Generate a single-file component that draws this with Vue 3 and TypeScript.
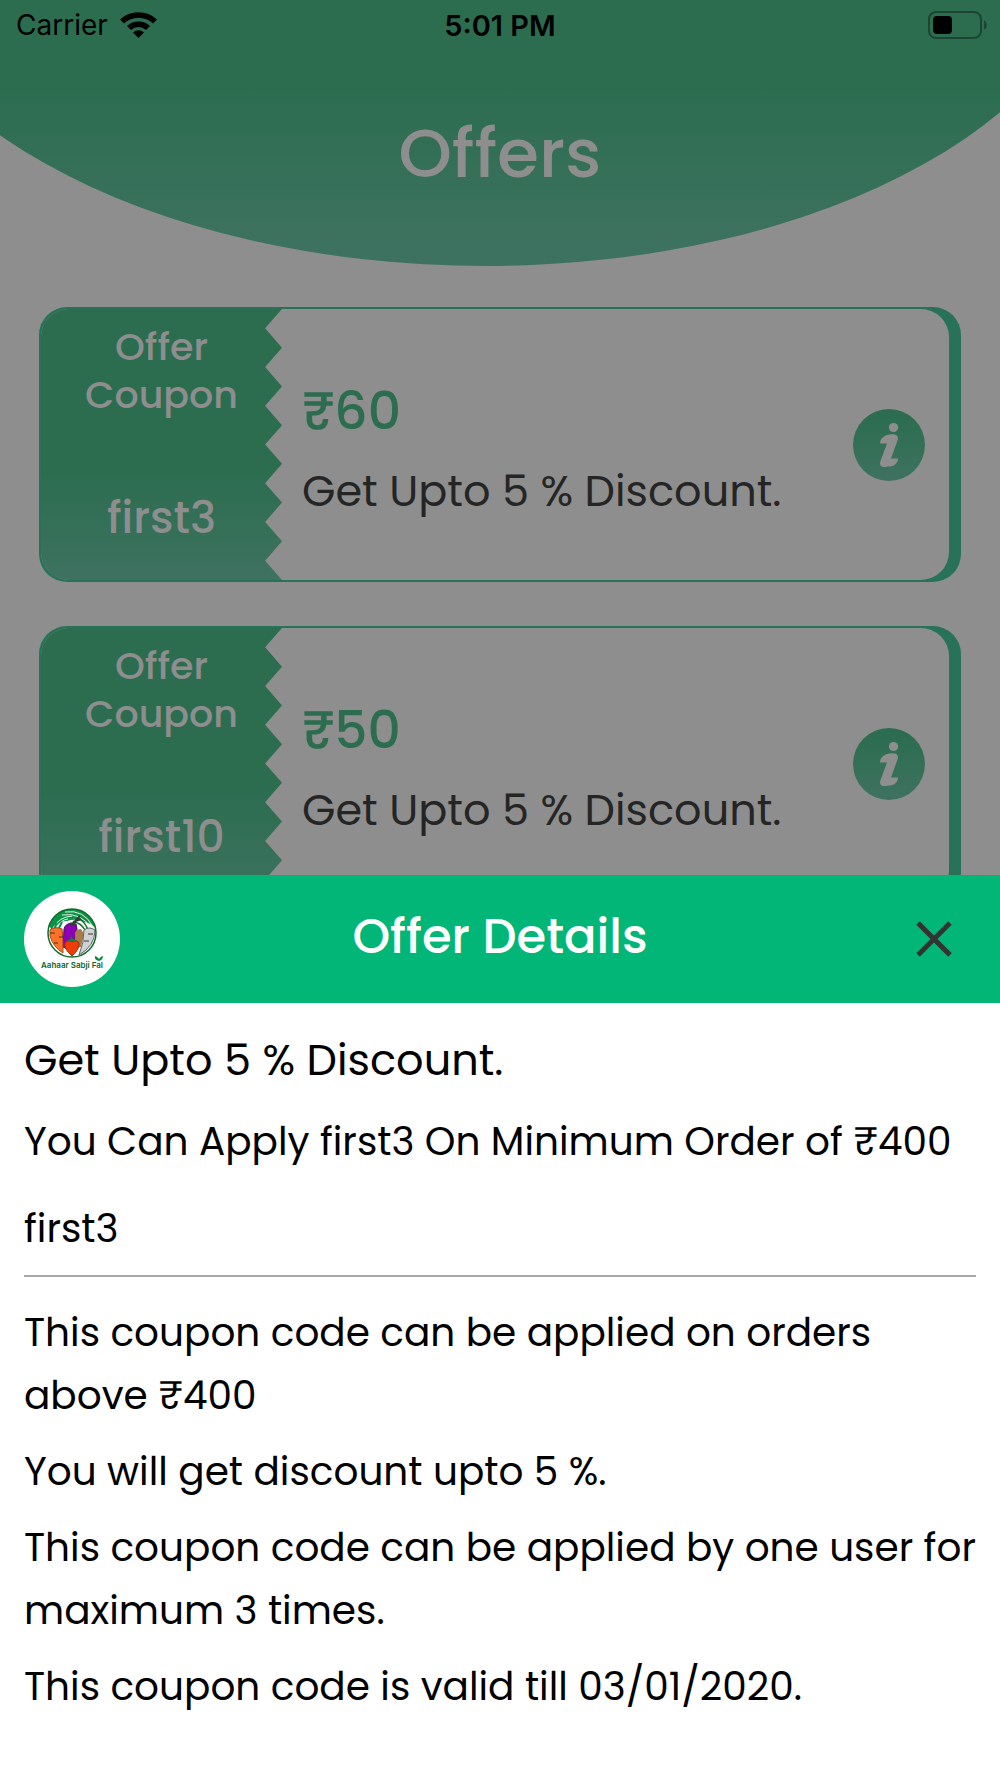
<script setup lang="ts">
import { computed, ref } from 'vue'

interface Offer {
  code: string
  amount: number
  percent: number
  minimumOrder: number
  maxUses: number
  validTill: string
}

const offers: Offer[] = [
  { code: 'first3', amount: 60, percent: 5, minimumOrder: 400, maxUses: 3, validTill: '03/01/2020' },
  { code: 'first10', amount: 50, percent: 5, minimumOrder: 400, maxUses: 3, validTill: '03/01/2020' },
]

const selected = ref<Offer | null>(offers[0])

const terms = computed<string[]>(() => {
  const offer = selected.value
  if (!offer) return []
  return [
    `This coupon code can be applied on orders above ₹${offer.minimumOrder}`,
    `You will get discount upto ${offer.percent} %.`,
    `This coupon code can be applied by one user for maximum ${offer.maxUses} times.`,
    `This coupon code is valid till ${offer.validTill}.`,
  ]
})
</script>

<template>
  <div class="screen">
    <header class="hero">
      <div class="status">
        <div class="carrier">
          <span>Carrier</span>
          <svg class="wifi" viewBox="0 0 37 28" aria-hidden="true">
            <path d="M0 8.500A27 27 0 0 1 37 8.500L33 12.500A21 21 0 0 0 4 12.500Z" />
            <path d="M7 15A17 17 0 0 1 30 15L26 19A11 11 0 0 0 11 19Z" />
            <path d="M13 21.500A8 8 0 0 1 24 21.500L18.500 27Z" />
          </svg>
        </div>
        <time class="clock">5:01 PM</time>
        <svg class="battery" viewBox="0 0 60 28" aria-hidden="true">
          <rect x="1" y="1" width="52" height="26" rx="7" fill="none" stroke="#1c4533" stroke-width="2" />
          <rect x="5" y="5" width="19" height="18" rx="4" />
          <path d="M56 9Q59 11 59 14T56 19Z" fill="#1c4533" />
        </svg>
      </div>
      <h1>Offers</h1>
    </header>

    <main class="offers">
      <article v-for="offer in offers" :key="offer.code" class="card">
        <div class="card-inner">
          <div class="stub">
            <p class="stub-label">Offer Coupon</p>
            <p class="stub-code">{{ offer.code }}</p>
          </div>
          <div class="summary">
            <p class="amount">₹{{ offer.amount }}</p>
            <p class="headline">Get Upto {{ offer.percent }} % Discount.</p>
          </div>
          <button class="info" type="button" aria-label="Offer information" @click="selected = offer">
            <svg viewBox="0 0 72 72" aria-hidden="true">
              <defs>
                <linearGradient id="info-fill" x1="0" y1="0" x2="0" y2="1">
                  <stop offset="0.1" stop-color="#2c6d50" />
                  <stop offset="1" stop-color="#3e7260" />
                </linearGradient>
              </defs>
              <circle cx="36" cy="36" r="36" fill="url(#info-fill)" />
              <circle cx="40.500" cy="18.500" r="4.600" fill="#8e8e8e" />
              <path
                d="M27 34.500C27 29 32 25.500 39 25.200C44 25 46 27.500 44.500 31.500L38 49.500H44.500C46 50 44 54 41.500 56C39 58 36 57 32.500 58C28 58.500 26 56 27.500 52L34 34.500Z"
                fill="#8e8e8e"
              />
            </svg>
          </button>
        </div>
      </article>
    </main>

    <section v-if="selected" class="sheet" role="dialog" aria-labelledby="sheet-title">
      <header class="sheet-head">
        <svg class="logo" viewBox="0 0 96 96" role="img" aria-label="Aahaar Sabji Fal">
          <circle cx="48" cy="48" r="48" fill="#fff" />
          <path d="M25 36Q30 18 48 18T71 37Q67 32 60 31Q52 27 43 30Q34 30 31 38Z" fill="#0b9347" />
          <path d="M29 37Q35 26 48 25M33 37Q36 29 44 28M38 24Q57 21 67 37M41 21Q60 18 69 36" fill="none" stroke="#e2f3df" stroke-width="1" />
          <path d="M61 39Q57 32 50 31M64 39Q62 33 57 29" fill="none" stroke="#176f2f" stroke-width="1.500" />
          <path d="M28 39L27 32M31 39L32 30M34 39L38 31" fill="none" stroke="#0b9347" stroke-width="2" />
          <path d="M40 38Q41 33 47 32L52 33Q54 37 52 43L49 55Q45 60 39 56Z" fill="#8d00b5" stroke="#4b1368" stroke-width="1" />
          <path d="M46 33Q50 33 52 29L56 25M46 33L52 34M49 31L57 28" fill="none" stroke="#333c3b" stroke-width="2" />
          <path d="M51 42Q52 38 57 38L60 43L57 56H51Z" fill="#a77c47" />
          <path d="M26 39Q31 35 38 38Q39 45 39 62Q29 56 26 45Z" fill="#ff7028" stroke="#a44c19" stroke-width="1" />
          <path d="M60 39Q65 35 71 39Q71 55 55 64Q60 52 60 39Z" fill="#ced1d5" stroke="#5b6661" stroke-width="1" />
          <path d="M48 65Q39 57 41 52Q43 48 48 51Q53 48 55 52Q56 58 48 65Z" fill="#ee3c06" stroke="#96310d" stroke-width="1" />
          <path d="M26 42H31M35 46H39M30 52H34M64 43H69M60 50H65" stroke="#423522" stroke-width="1" />
          <path d="M43 50L47 48L46 44L49 48L53 50L48 51Z" fill="#16813a" />
          <circle cx="48" cy="42" r="24" fill="none" stroke="#136a2b" stroke-width="1.500" />
          <path d="M75 70Q70 69 71 65Q74 66 75 68Q77 65 79 65Q79 69 75 70Z" fill="#078b3b" />
          <text x="48" y="77" text-anchor="middle">Aahaar Sabji Fal</text>
        </svg>
        <h2 id="sheet-title">Offer Details</h2>
        <button class="close" type="button" aria-label="Close" @click="selected = null">
          <svg viewBox="0 0 36 36" aria-hidden="true">
            <path d="M2 2L34 34M34 2L2 34" stroke="#333" stroke-width="5" />
          </svg>
        </button>
      </header>
      <div class="sheet-body">
        <p class="sheet-headline">Get Upto {{ selected.percent }} % Discount.</p>
        <p class="condition">You Can Apply {{ selected.code }} On Minimum Order of ₹{{ selected.minimumOrder }}</p>
        <p class="code">{{ selected.code }}</p>
        <ul class="terms">
          <li v-for="term in terms" :key="term">{{ term }}</li>
        </ul>
      </div>
    </section>
  </div>
</template>

<style>
body {
  margin: 0;
  background: #8e8e8e;
}
</style>

<style scoped>
* {
  box-sizing: border-box;
}

h1,
h2,
p,
ul {
  margin: 0;
  padding: 0;
  font-weight: inherit;
}

button {
  border: 0;
  padding: 0;
  background: none;
  cursor: pointer;
}

svg {
  display: block;
}

.screen {
  height: 100vh;
  overflow: hidden;
  background: #8e8e8e;
  color: #000;
  font-family: Poppins, Inter, "Noto Sans", sans-serif;
  font-weight: 400;
}

.hero {
  height: 266px;
  background: linear-gradient(#2c6d50 90px, #3e7260 250px);
  clip-path: ellipse(62% 347px at 48.5% -81px);
}

.status {
  display: grid;
  grid-template-columns: 1fr auto 1fr;
  align-items: center;
  height: 50px;
  padding: 0 12px;
  font-family: Inter, "Noto Sans", sans-serif;
  font-size: 28px;
}

.carrier {
  display: flex;
  align-items: center;
  gap: 12px;
  padding-left: 4px;
}

.wifi {
  width: 37px;
  height: 28px;
}

.clock {
  font-size: 29px;
  font-weight: 600;
}

.battery {
  width: 60px;
  height: 28px;
  justify-self: end;
}

h1 {
  padding-top: 56px;
  color: #8e8e8e;
  font-size: 68px;
  font-weight: 500;
  line-height: 96px;
  text-align: center;
}

.offers {
  display: flex;
  flex-direction: column;
  gap: 44px;
  padding: 41px 39px;
}

.card {
  padding: 2px 12px 2px 2px;
  border-radius: 28px;
  background: #28725a;
}

.card-inner {
  display: flex;
  align-items: center;
  border-radius: 28px;
  overflow: hidden;
  background: #8e8e8e;
}

.stub {
  display: flex;
  flex-direction: column;
  align-items: center;
  justify-content: space-between;
  width: 241px;
  height: 271px;
  padding: 14px 14px 30px;
  background: linear-gradient(#2c6d50 60%, #3e7260);
  clip-path: polygon(0 0, 100% 0, 93% 7.14%, 100% 14.29%, 93% 21.43%, 100% 28.57%, 93% 35.71%, 100% 42.86%, 93% 50%, 100% 57.14%, 93% 64.29%, 100% 71.43%, 93% 78.57%, 100% 85.71%, 93% 92.86%, 100% 100%, 0 100%);
  color: #8e8e8e;
  font-weight: 500;
  text-align: center;
}

.stub-label {
  width: 160px;
  font-size: 38px;
  line-height: 48px;
}

.stub-code {
  font-size: 44px;
  line-height: 64px;
}

.summary {
  flex: 1;
  padding: 12px 0 0 20px;
}

.amount {
  color: #2c6d50;
  font-size: 52px;
  font-weight: 500;
  line-height: 80px;
}

.headline {
  color: #252525;
  font-size: 43px;
  line-height: 80px;
}

.info {
  width: 72px;
  height: 72px;
  margin-right: 24px;
}

.sheet {
  position: fixed;
  right: 0;
  bottom: 0;
  left: 0;
  background: #fff;
}

.sheet-head {
  display: grid;
  grid-template-columns: 1fr auto 1fr;
  align-items: center;
  height: 128px;
  padding: 0 24px;
  background: #02b678;
}

.logo {
  width: 96px;
  height: 96px;
}

.logo text {
  fill: #0b642c;
  font-family: Inter, "Noto Sans", sans-serif;
  font-size: 8px;
  font-weight: 600;
}

h2 {
  padding-bottom: 4px;
  color: #fff;
  font-size: 48px;
  font-weight: 500;
  line-height: 64px;
}

.close {
  justify-self: end;
  padding: 24px;
}

.close svg {
  width: 36px;
  height: 36px;
}

.sheet-body {
  padding: 26px 24px 60px;
  font-size: 39px;
  line-height: 63px;
}

.sheet-headline {
  font-size: 43px;
}

.condition {
  margin-top: 18px;
}

.code {
  margin-top: 24px;
  padding-bottom: 15px;
  border-bottom: 2px solid #a8a8a8;
}

.terms {
  display: flex;
  flex-direction: column;
  gap: 13px;
  margin-top: 24px;
  list-style: none;
}
</style>
